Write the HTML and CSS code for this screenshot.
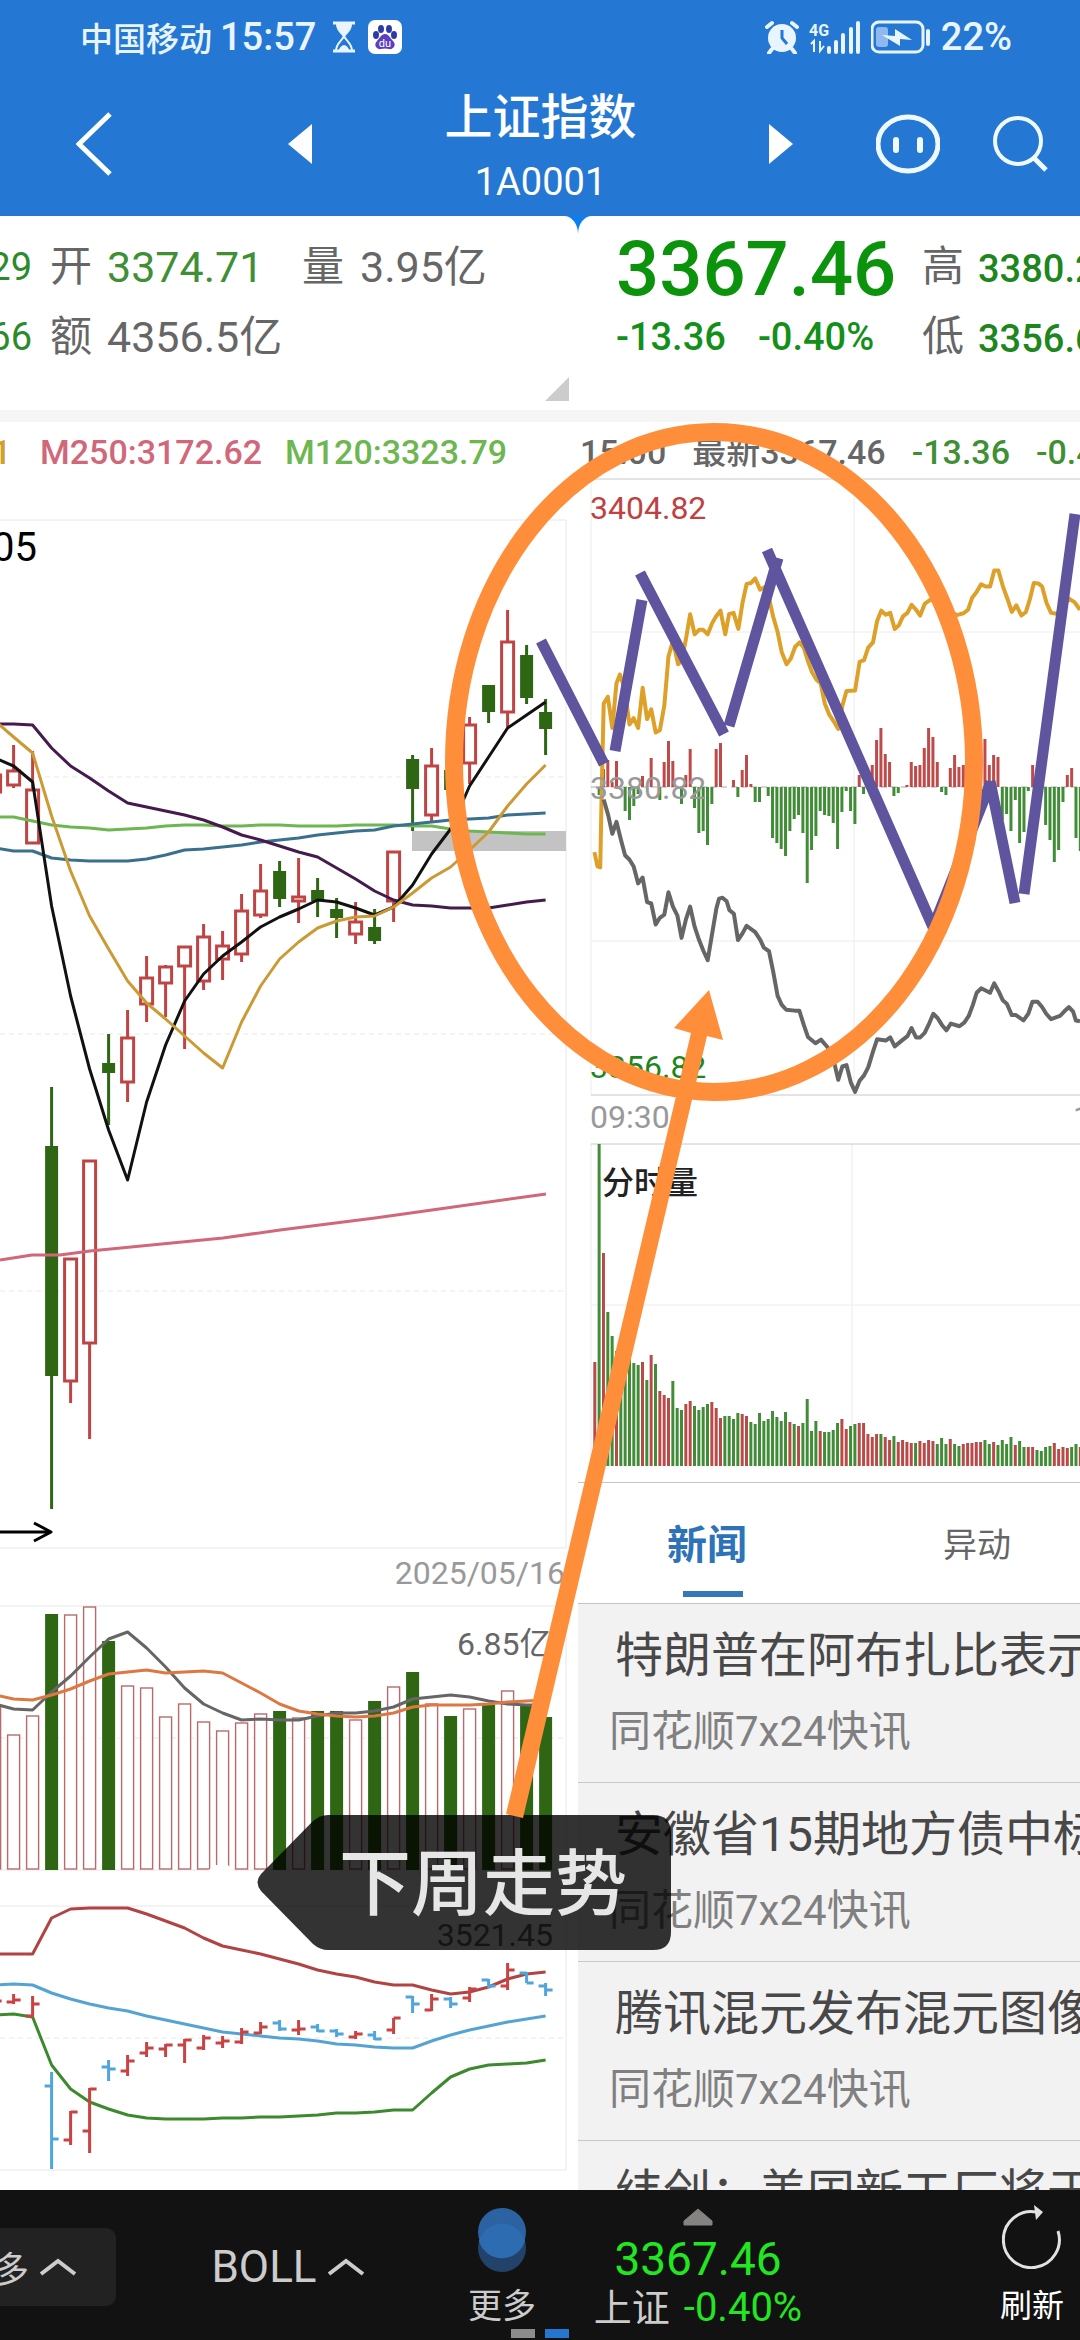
FILE: index.html
```html
<!DOCTYPE html>
<html lang="zh-CN">
<head>
<meta charset="utf-8">
<meta name="viewport" content="width=device-width, initial-scale=1">
<title>上证指数 1A0001</title>
<link rel="stylesheet" href="styles.css">
</head>
<body>
<div class="app">
  <div class="status">
    <span class="carrier">中国移动</span>
    <span class="clock">15:57</span>
    <svg class="glass" viewBox="0 0 24 32" width="24" height="32"><path d="M1 2H23M1 30H23" stroke="#e8f5ff" stroke-width="3"/><path d="M4 3H20C20 10 14 13 13 16H11C10 13 4 10 4 3Z" fill="#e8f5ff"/><path d="M4 30C4 22 11 19 12 15C13 19 20 22 20 30" fill="none" stroke="#e8f5ff" stroke-width="2"/><path d="M6 30Q12 18 18 30Z" fill="#e8f5ff"/></svg>
    <svg class="paw" viewBox="0 0 34 34" width="34" height="34"><rect width="34" height="34" rx="7" fill="#fff"/><g fill="#2c3aa8"><ellipse cx="13" cy="9" rx="3" ry="4"/><ellipse cx="21" cy="9" rx="3" ry="4"/><ellipse cx="8" cy="15" rx="3" ry="4"/><ellipse cx="26" cy="15" rx="3" ry="4"/><path d="M17 14C21 14 22 18 25 21C29 25 25 30 21 29Q17 28 13 29C9 30 5 25 9 21C12 18 13 14 17 14Z" fill="#5b3fc0"/></g><text x="17" y="27" text-anchor="middle" class="paw-text">du</text></svg>
    <span class="spacer"></span>
    <svg class="alarm" viewBox="0 0 34 34" width="34" height="34"><circle cx="17" cy="18" r="14" fill="#e8f5ff"/><path d="M2 7L7 3M32 7L27 3M7 29L4 33M27 29L30 33" stroke="#e8f5ff" stroke-width="4" stroke-linecap="round"/><path d="M17 10V18L22 24" fill="none" stroke="#2478d4" stroke-width="3"/></svg>
    <svg class="signal" viewBox="0 0 52 34" width="52" height="34"><text x="0" y="16" class="net">4G</text><path d="M2 24L5 21V32M11 21V31L15 26" fill="none" stroke="#e8f5ff" stroke-width="2"/><path d="M20 28V32M27 22V32M34 15V32M42 9V32M49 3V32" stroke="#e8f5ff" stroke-width="4" stroke-linecap="round"/></svg>
    <svg class="battery" viewBox="0 0 60 34" width="60" height="34"><rect x="1" y="2" width="51" height="30" rx="7" fill="none" stroke="#e8f5ff" stroke-width="3"/><rect x="5" y="7" width="12" height="20" rx="3" fill="#8fb9ee"/><path d="M11 15L24 16V9L41 20L29 19V26Z" fill="#e8f5ff"/><path d="M57 11V24" stroke="#e8f5ff" stroke-width="4" stroke-linecap="round"/></svg>
    <span class="pct">22%</span>
  </div>

  <header class="top">
    <button class="icon back" aria-label="返回"><svg viewBox="0 0 36 64" width="36" height="64"><path d="M34 2L3 32L34 62" fill="none" stroke="#fff" stroke-width="5"/></svg></button>
    <button class="icon" aria-label="上一只"><svg viewBox="0 0 24 40" width="24" height="40"><path d="M24 0V40L0 20Z" fill="#fff"/></svg></button>
    <div class="name"><h1>上证指数</h1><p>1A0001</p></div>
    <button class="icon next" aria-label="下一只"><svg viewBox="0 0 24 40" width="24" height="40"><path d="M0 0V40L24 20Z" fill="#fff"/></svg></button>
    <button class="icon face" aria-label="助手"><svg viewBox="0 0 64 60" width="64" height="60"><ellipse cx="32" cy="30" rx="30" ry="27" fill="none" stroke="#eefaff" stroke-width="5"/><path d="M20 26V36M44 26V36" stroke="#eefaff" stroke-width="6" stroke-linecap="round"/></svg></button>
    <button class="icon" aria-label="搜索"><svg viewBox="0 0 56 56" width="56" height="56"><circle cx="26" cy="25" r="23" fill="none" stroke="#eefaff" stroke-width="4"/><path d="M42 42L54 54" stroke="#eefaff" stroke-width="5"/></svg></button>
  </header>

  <section class="quotes">
    <div class="card left">
      <span class="cut">29</span><span class="lab">开</span><span class="num down">3374.71</span><span class="lab">量</span><span class="num">3.95亿</span>
      <span class="cut">66</span><span class="lab">额</span><span class="num">4356.5亿</span>
      <svg class="fold" viewBox="0 0 24 24" width="24" height="24"><path d="M24 0V24H0Z" fill="#ccc"/></svg>
    </div>
    <div class="card right">
      <strong class="price">3367.46</strong><span class="lab">高</span><span class="small">3380.29</span>
      <span class="small chg"><span>-13.36</span><span>-0.40%</span></span><span class="lab">低</span><span class="small">3356.66</span>
    </div>
  </section>

  <main class="panes">
    <section class="pane">
      <p class="legend"><span class="m20">1</span><span class="m250">M250:3172.62</span><span class="m120">M120:3323.79</span></p>
      <svg class="chart" viewBox="0 480 578 1110">
        <path class="frame" d="M0 520H566V1548H0"/>
        <path class="dash" d="M0 777H565M0 1034H565M0 1291H565"/>
        <rect x="412" y="831" width="154" height="20" fill="#c3c3c3"/>
        <g id="candles"></g>
        <g id="averages"></g>
        <path d="M0 1260L32 1255H60L90 1251L223 1238L280 1230L375 1218L432 1210L546 1194" class="line" stroke="#d0687a"/>
        <path d="M0 1532H50M34 1523L51 1532L34 1541" class="line" stroke="#000"/>
        <text x="37" y="561" class="t40" text-anchor="end">05</text>
        <text x="565" y="1584" class="t32 dim" text-anchor="end">2025/05/16</text>
      </svg>
      <svg class="chart" viewBox="0 1590 578 300">
        <path class="frame" d="M0 1606H566V1870H0"/>
        <path class="dash" d="M0 1738H565"/>
        <g id="volumes"></g>
        <path d="M208 1871L214 1865H228L233 1871Z" fill="#fff"/>
        <g id="volumeLines"></g>
        <text x="457" y="1655" class="t32 mid">6.85亿</text>
      </svg>
      <svg class="chart" viewBox="0 1890 578 300">
        <path class="frame" d="M0 1906H566V2170H0"/>
        <path class="dash" d="M0 2038H565"/>
        <g id="bands"></g>
        <g id="ticks"></g>
        <text x="553" y="1946" class="t32 mid" text-anchor="end">3521.45</text>
      </svg>
    </section>

    <section class="pane">
      <p class="now"><span>15:00</span><span>最新3367.46</span><span class="down">-13.36</span><span class="down">-0.40%</span></p>
      <svg class="chart" viewBox="578 478 502 660">
        <path class="grid" d="M591 478V1095M854 478V1095M591 632H1080M591 941H1080"/>
        <path class="rule" d="M591 479H1080M591 1095H1080"/>
        <path d="M591 787H1080" stroke="#a8a8a8" stroke-dasharray="6 4"/>
        <g id="power"></g>
        <g transform="translate(540 420) scale(.34437 .44643)">
          <path class="line fixed thick" stroke="#dda028" d="M158 968L167 1000 175 1002 180 800 185 635 197 620 210 690 222 590 232 570 245 600 260 682 272 668 285 690 298 600 311 670 323 648 336 700 348 695 361 640 373 530 386 495 401 547 411 540 424 490 436 435 449 480 462 470 474 470 487 480 500 455 511 440 524 427 538 480 549 435 562 432 576 468 588 410 600 367 613 365 625 355 639 380 652 375 665 400 677 440 690 475 702 520 716 547 728 535 741 508 754 498 766 510 778 540 790 565 803 582 815 590 827 635 840 660 853 675 866 692 878 640 890 607 915 606 928 542 941 538 953 510 967 498 979 450 991 427 1004 436 1017 432 1030 468 1042 460 1054 440 1067 432 1079 414 1092 425 1104 438 1117 412 1135 402 1150 410 1180 425 1210 437 1230 433 1243 425 1255 398 1268 385 1281 368 1294 373 1307 373 1319 337 1331 337 1344 372 1358 402 1370 430 1383 415 1398 438 1411 430 1423 400 1434 365 1447 366 1458 373 1471 410 1484 432 1500 434 1520 420 1535 400 1552 408 1568 425"/>
          <path class="line fixed thick" stroke="#666" d="M185 850L198 885 210 927 222 900 235 940 247 975 260 985 272 1000 285 1038 298 1025 311 1080 323 1083 336 1130 348 1115 361 1108 373 1058 386 1090 399 1110 411 1160 424 1118 436 1090 449 1135 462 1165 475 1190 487 1210 500 1150 512 1095 520 1072 530 1070 542 1078 550 1098 563 1106 575 1165 588 1150 600 1133 625 1147 640 1165 650 1182 665 1190 677 1235 690 1290 702 1310 715 1321 740 1323 753 1323 766 1355 778 1382 800 1396 816 1388 835 1405 853 1435 866 1478 878 1448 890 1445 903 1485 915 1505 928 1480 941 1468 953 1450 967 1415 979 1387 1004 1390 1017 1383 1030 1403 1054 1388 1067 1380 1079 1362 1092 1383 1104 1383 1117 1373 1130 1352 1142 1330 1155 1340 1167 1355 1180 1367 1193 1352 1218 1358 1232 1350 1245 1335 1257 1310 1268 1283 1281 1273 1307 1283 1319 1262 1332 1280 1344 1300 1356 1308 1370 1333 1382 1333 1404 1345 1418 1330 1430 1303 1445 1303 1458 1315 1470 1330 1484 1342 1510 1335 1522 1325 1536 1315 1548 1325 1556 1345 1568 1347"/>
        </g>
        <text x="590" y="519" class="t32" fill="#bf4141">3404.82</text>
        <text x="590" y="799" class="t32 dim">3380.82</text>
        <text x="590" y="1078" class="t32" fill="#1d861d">3356.82</text>
        <text x="590" y="1128" class="t32 dim">09:30</text>
        <text x="1073" y="1128" class="t32 dim">11:30</text>
      </svg>
      <svg class="chart" viewBox="578 1138 502 344">
        <path class="grid" d="M591 1144V1466M852 1144V1466M591 1305H1080"/>
        <path class="rule" d="M591 1144H1080"/>
        <g id="minutes"></g>
        <text x="602" y="1194" class="t32 strong" fill="#222">分时量</text>
      </svg>
      <nav class="tabs"><button class="tab on">新闻</button><button class="tab">异动</button></nav>
      <ul class="news">
        <li><a href="#n1">特朗普在阿布扎比表示</a><span>同花顺7x24快讯</span></li>
        <li><a href="#n2">安徽省15期地方债中标</a><span>同花顺7x24快讯</span></li>
        <li><a href="#n3">腾讯混元发布混元图像</a><span>同花顺7x24快讯</span></li>
        <li><a href="#n4">纬创：美国新工厂将于</a></li>
      </ul>
    </section>
  </main>

  <footer class="bar">
    <button class="pill">多<svg viewBox="0 0 38 18" width="38" height="18"><path d="M2 16L19 3L36 16" fill="none" stroke="#ccc" stroke-width="4"/></svg></button>
    <button class="boll">BOLL<svg viewBox="0 0 38 18" width="38" height="18"><path d="M2 16L19 3L36 16" fill="none" stroke="#ccc" stroke-width="4"/></svg></button>
    <button class="stack"><svg viewBox="0 0 48 64" width="48" height="64"><circle cx="24" cy="40" r="24" fill="#23426a"/><circle cx="24" cy="24" r="24" fill="#2c62a2"/><path d="M1 33A24 24 0 0 1 47 33A24 24 0 0 1 1 33Z" fill="#2e6cb2"/></svg>更多</button>
    <button class="index"><svg viewBox="0 0 30 18" width="30" height="18"><path d="M15 1L29 13V17H1V13Z" fill="#858282" stroke="#858282" stroke-linejoin="round"/></svg><span class="big">3367.46</span><span class="sub">上证<em>-0.40%</em></span></button>
    <button class="stack reload"><svg viewBox="0 0 60 64" width="60" height="64"><path d="M56 26A28 28 0 1 1 34 7" fill="none" stroke="#e2e2e2" stroke-width="3"/><path d="M32 0L41 7L34 15Z" fill="#e2e2e2"/></svg>刷新</button>
    <span class="dots"><i></i><i class="cur"></i></span>
  </footer>

  <svg class="marks" viewBox="0 0 1080 2340" aria-label="下周走势">
    <path d="M541 641L604 764M615 751L642 600M640 573L724 734M729 726L778 558M767 550L933 927M934 925L991 782M990 781L1015 903M1024 894L1075 514" fill="none" stroke="#5f549e" stroke-width="11"/>
    <ellipse cx="714" cy="762" rx="260" ry="330" fill="none" stroke="#ff8e3a" stroke-width="18"/>
    <path d="M328 1815H653Q671 1815 671 1833V1932Q671 1950 653 1950H328Q320 1950 313 1944L261 1891Q254 1882 261 1874L313 1821Q320 1815 328 1815Z" fill="#000" fill-opacity=".8"/>
    <path d="M506 1814L691 1033L674 1028L709 990L723 1040L707 1036L523 1818Z" fill="#ff8e3a"/>
    <text x="339" y="1909" class="note">下周走势</text>
  </svg>
</div>
<script src="charts.js"></script>
</body>
</html>
```
FILE: styles.css
```css
* { box-sizing: border-box; margin: 0; padding: 0; }
body {
  font-family: Roboto, "Noto Sans CJK SC", sans-serif;
  background: #fff;
  color: #666;
}
button { border: 0; background: none; font: inherit; color: inherit; display: flex; align-items: center; justify-content: center; }
a { color: inherit; text-decoration: none; }
svg { display: block; flex: none; }
.app { position: relative; height: 100vh; display: flex; flex-direction: column; overflow: hidden; }

.status { height: 72px; padding: 2px 68px 0 80px; display: flex; align-items: center; background: #2478d4; color: #e8f5ff; flex: none; }
.carrier { font-size: 33px; font-weight: 500; margin-right: 8px; }
.clock, .pct { font-size: 38px; font-weight: 500; }
.glass { margin-left: 16px; }
.paw { margin-left: 12px; }
.paw-text { font-size: 11px; fill: #fff; }
.spacer { flex: 1; }
.alarm { margin-right: 10px; }
.signal { margin-right: 10px; }
.battery { margin-right: 10px; }
.net { font-size: 16px; font-weight: 700; fill: #e8f5ff; }

.top { height: 144px; padding: 0 32px 0 76px; display: flex; align-items: center; background: #2478d4; color: #fff; flex: none; }
.back { margin-right: 176px; }
.next { margin-right: 83px; }
.face { margin-right: 52px; }
.name { flex: 1; text-align: center; padding-top: 8px; }
.name h1 { font-size: 48px; line-height: 68px; font-weight: 500; }
.name p { font-size: 38px; line-height: 60px; }

.quotes { display: grid; grid-template-columns: 578fr 502fr; background: #0a80f0; border-bottom: 12px solid #f5f5f5; flex: none; }
.card { position: relative; height: 194px; background: #fff; padding-top: 16px; display: grid; grid-auto-rows: 70px; align-items: center; white-space: nowrap; overflow: hidden; }
.left { grid-template-columns: 50px 57px 195px 58px 1fr; border-top-right-radius: 14px 18px; }
.right { grid-template-columns: 306px 56px 1fr; padding-left: 38px; border-top-left-radius: 14px 18px; }
.cut { font-size: 38px; color: #2b8a2b; width: 32px; display: flex; justify-content: flex-end; }
.lab, .num { font-size: 42px; line-height: 70px; }
.num { font-size: 43px; }
.num.down { color: #3f8f35; }
.small { font-size: 38px; font-weight: 500; color: #1d861d; padding-top: 4px; }
.chg { display: flex; gap: 32px; color: #12901a; padding-top: 0; }
.price { font-size: 76px; font-weight: 500; color: #0c930c; line-height: 70px; padding-top: 4px; }
.fold { position: absolute; right: 9px; bottom: 9px; }

.panes { flex: 1; min-height: 0; display: grid; grid-template-columns: 578fr 502fr; grid-template-rows: minmax(0, 1fr); }
.pane { min-width: 0; min-height: 0; display: flex; flex-direction: column; overflow: hidden; white-space: nowrap; }
.chart { width: 100%; height: auto; }
.legend { height: 58px; line-height: 60px; font-size: 34px; font-weight: 500; display: flex; flex: none; }
.m20 { color: #d0a030; width: 40px; text-indent: -8px; }
.m250 { color: #d0687a; width: 245px; }
.m120 { color: #6db650; }
.now { height: 56px; line-height: 60px; font-size: 34px; font-weight: 500; display: flex; gap: 26px; padding-left: 2px; flex: none; }
.now .down { color: #3f8f35; }

.frame { fill: none; stroke: #e8e8e8; }
.grid { fill: none; stroke: #ececec; }
.rule { fill: none; stroke: #c8c8c8; }
.dash { stroke: #e8e8e8; stroke-dasharray: 5 4; }
.line { fill: none; stroke-width: 3; stroke-linejoin: round; }
.thick { stroke-width: 4; }
.fixed { vector-effect: non-scaling-stroke; }
.t32 { font-size: 32px; }
.t40 { font-size: 40px; fill: #000; }
.strong { font-weight: 500; }
.dim { fill: #999; }
.mid { fill: #666; }

.tabs { height: 122px; border-top: 1px solid #c4c4c4; border-bottom: 1px solid #c4c4c4; display: flex; flex: none; }
.tab { position: relative; flex: 0 0 53%; font-size: 34px; padding-bottom: 2px; }
.tab.on { font-size: 40px; font-weight: 700; color: #2e73b8; padding-right: 8px; }
.tab.on::after { content: ""; position: absolute; left: 50%; bottom: 6px; width: 60px; height: 6px; margin-left: -28px; background: #3478b8; }

.news { list-style: none; flex: 1; min-height: 0; background: #f2f2f2; overflow: hidden; }
.news li { height: 179px; padding: 17px 0 0 31px; border-bottom: 1px solid #c8c8c8; }
.news a { display: block; padding-left: 6px; font-size: 48px; line-height: 70px; color: #484848; }
.news span { display: block; font-size: 42px; line-height: 82px; color: #808080; }

.bar { position: relative; height: 150px; flex: none; background: #121212; color: #ccc; display: grid; grid-template-columns: 116fr 344fr 84fr 308fr 228fr; align-items: center; white-space: nowrap; }
.pill { height: 78px; justify-content: flex-end; padding-right: 39px; gap: 10px; font-size: 36px; background: #222; border-radius: 0 10px 10px 0; overflow: hidden; }
.boll { font-size: 44px; gap: 10px; }
.stack { align-self: stretch; flex-direction: column; justify-content: flex-start; padding-top: 18px; font-size: 34px; line-height: 68px; }
.reload { justify-self: end; width: 96px; padding-top: 15px; color: #fff; font-size: 32px; line-height: 74px; }
.index { align-self: stretch; flex-direction: column; justify-content: flex-start; padding-top: 18px; color: #22e622; }
.big { font-size: 46px; line-height: 66px; }
.sub { font-size: 38px; line-height: 32px; color: #ccc; display: flex; gap: 14px; }
.sub em { font-size: 40px; font-style: normal; color: #22e622; }
.dots { position: absolute; left: 50%; bottom: 2px; margin-left: -29px; display: flex; gap: 10px; }
.dots i { width: 24px; height: 9px; background: #8c8c8c; }
.dots .cur { background: #2676cf; }

.marks { position: absolute; left: 0; top: 0; width: 100%; pointer-events: none; }
.note { font-size: 72px; font-weight: 500; fill: #e6e6e6; }
```
FILE: charts.js
```js
const RED = '#bf4444', GREEN = '#2f6613';
const x = i => 13.6 + 19 * i;
const put = (id, html) => { document.getElementById(id).innerHTML = html; };
const line = (color, values) =>
  `<path class="line" stroke="${color}" d="M${values.map((v, i) => `${i ? x(i - 1) : -5} ${v}`).join('L')}"/>`;

// index, colour, high, body top, body bottom, low
const candles = [
  [-1,'r',774,774,793,793],[0,'r',745,770,786,788],[1,'r',751,789,844,844],[2,'g',1087,1146,1376,1509],
  [3,'r',1258,1258,1382,1403],[4,'r',1160,1160,1344,1439],[5,'g',1034,1063,1073,1125],[6,'r',1010,1037,1083,1102],
  [7,'r',956,977,1005,1022],[8,'r',965,966,984,1017],[9,'r',946,946,967,1049],[10,'r',924,936,982,990],
  [11,'r',931,945,960,980],[12,'r',894,910,955,962],[13,'r',864,890,916,918],[14,'g',861,871,899,907],
  [15,'r',858,896,902,923],[16,'g',878,890,901,917],[17,'g',898,909,918,938],[18,'r',902,921,935,944],
  [19,'g',909,927,941,944],[20,'r',851,851,902,922],[21,'g',755,759,789,831],[22,'r',748,765,816,823],
  [23,'g',766,770,790,806],[24,'r',717,724,764,784],[25,'g',685,685,712,723],[26,'r',610,641,713,727],
  [27,'g',645,655,698,704],[28,'g',699,712,729,755]];
put('candles', candles.map(([i, k, h, t, b, l]) => {
  const c = k === 'r' ? RED : GREEN;
  const body = k === 'r'
    ? `<rect x="${x(i) - 6}" y="${t + 1}" width="12" height="${b - t - 2}" fill="#fff" stroke="${c}" stroke-width="3"/>`
    : `<rect x="${x(i) - 6.5}" y="${t}" width="13" height="${b - t}" fill="${c}"/>`;
  return `<path d="M${x(i)} ${h}V${t}M${x(i)} ${b}V${l}" stroke="${c}" stroke-width="3"/>${body}`;
}).join(''));

put('averages',
  line('#6db650', [817,817,821,825,827,828,830,829,828,826,825,825,826,826,825,825,826,826,826,825,825,825,826,826,829,831,832,833,834,834]) +
  line('#39708f', [848,851,851,858,860,861,861,861,859,855,850,849,847,845,842,840,838,835,833,831,830,826,824,822,820,819,818,815,814,813]) +
  line('#451a4c', [724,724,725,748,766,778,791,803,807,811,815,820,827,835,840,846,852,857,868,879,891,900,905,906,908,908,908,905,902,900]) +
  line('#111', [758,766,782,906,996,1069,1130,1180,1102,1045,1001,974,956,942,927,917,909,900,902,908,915,907,885,854,829,786,757,728,715,702]) +
  line('#cc9a35', [721,737,753,816,871,916,949,981,1003,1019,1036,1053,1068,1022,986,959,942,928,921,917,916,907,893,878,867,850,832,806,784,765]));

const volumes = 'r1706 r1734 r1715 g1614 r1614 r1606 g1641 r1685 r1687 r1716 r1703 r1721 r1730 r1722 r1713 g1711 r1717 g1711 g1711 r1719 g1701 r1686 g1672 r1703 g1716 r1708 g1705 r1690 g1704 g1717'.split(' ');
put('volumes', volumes.map((v, n) => {
  const top = +v.slice(1), c = x(n - 1);
  return v[0] === 'r'
    ? `<rect x="${c - 6}" y="${top + 1}" width="12" height="${1868 - top}" fill="#fff" stroke="#b96a6a" stroke-width="1.4"/>`
    : `<rect x="${c - 6.5}" y="${top}" width="13" height="${1870 - top}" fill="${GREEN}"/>`;
}).join(''));
put('volumeLines',
  line('#666', [1704,1709,1710,1692,1676,1657,1639,1632,1648,1667,1688,1704,1713,1720,1719,1720,1720,1716,1713,1713,1711,1707,1699,1697,1695,1697,1701,1704,1705,1705]) +
  line('#dd7844', [1695,1699,1700,1695,1689,1681,1674,1672,1670,1673,1672,1671,1673,1683,1693,1704,1711,1714,1716,1717,1716,1713,1707,1705,1705,1705,1704,1702,1701,1700]));

put('bands',
  line('#b24343', [1954,1954,1954,1918,1909,1908,1908,1908,1914,1921,1928,1938,1946,1950,1954,1959,1964,1970,1974,1977,1982,1985,1985,1990,1994,1992,1987,1979,1974,1972]) +
  line('#55a3d3', [1985,1984,1985,1993,1999,2004,2008,2011,2016,2020,2024,2028,2032,2034,2036,2038,2039,2041,2044,2045,2047,2048,2048,2041,2035,2030,2026,2022,2019,2016]) +
  line('#3d8a2e', [2015,2014,2017,2065,2089,2102,2109,2115,2118,2119,2119,2119,2118,2118,2117,2117,2116,2115,2113,2113,2112,2110,2110,2093,2077,2069,2065,2064,2063,2060]));

// colour, high, low, open, close
const ticks = [
  ['r',1999,2003,2001,2001],['r',1994,2004,2002,2000],['r',1996,2017,2016,2004],['b',2072,2169,2086,2139],
  ['r',2111,2145,2140,2112],['r',2088,2153,2131,2089],['b',2060,2081,2067,2069],['r',2055,2076,2071,2061],
  ['r',2042,2057,2053,2048],['r',2044,2057,2049,2045],['r',2039,2063,2045,2040],['r',2035,2050,2048,2038],
  ['r',2036,2048,2043,2041],['r',2028,2044,2042,2032],['r',2022,2034,2033,2027],['b',2020,2031,2023,2029],
  ['r',2020,2035,2030,2029],['b',2024,2032,2027,2031],['b',2029,2037,2031,2034],['r',2031,2039,2037,2034],
  ['b',2031,2040,2035,2039],['r',2018,2034,2030,2018],['b',1996,2013,1997,2004],['r',1994,2011,2010,1999],
  ['b',1997,2008,1999,2004],['r',1987,2002,1998,1989],['b',1979,1988,1980,1986],['r',1963,1990,1986,1970],
  ['b',1972,1983,1973,1983],['b',1983,1996,1986,1990]];
put('ticks', ticks.map(([k, h, l, o, c], n) =>
  `<path d="M${x(n - 1)} ${h}V${l}M${x(n - 1) - 7} ${o}h7M${x(n - 1)} ${c}h7" fill="none" stroke="${k === 'r' ? '#c94343' : '#4fa6dc'}" stroke-width="3"/>`).join(''));

// minute bars share a 4.33 unit pitch
const mx = j => 594.8 + 4.335 * j;
const power = { 1:-8,2:18,3:27,4:5,5:26,7:-24,8:-33,9:-19,10:-7,11:11,13:29,15:-13,16:25,17:46,18:26,20:-17,21:12,22:38,23:-21,24:-46,25:-44,26:-58,27:-17,
  28:38,29:44,32:7,33:-10,34:17,35:32,36:3,37:-15,38:-15,40:-9,41:-51,42:-56,43:-62,44:-69,45:-44,46:-32,47:-28,48:-46,49:-96,50:-63,51:-49,52:-24,
  53:-28,54:-29,55:-36,56:-62,57:-25,58:-4,59:-24,60:-37,61:12,62:-7,63:16,64:22,65:47,66:59,67:33,68:25,69:-9,70:-6,72:2,73:25,74:21,75:22,76:39,77:59,78:50,
  79:25,80:-5,81:-8,82:19,83:32,84:20,85:22,86:25,87:30,88:20,90:48,91:22,92:32,93:30,94:-33,95:-27,96:-44,97:-13,98:-56,99:-45,100:-4,101:22,
  104:-38,105:-53,106:-75,107:-63,108:-15,109:12,110:19,111:-51,112:-64 };
put('power', Object.entries(power).map(([j, v]) =>
  `<path d="M${mx(+j)} 787v${-v}" stroke="${v > 0 ? '#bf4a4a' : '#418c36'}" stroke-width="3"/>`).join(''));

const minutes = 'r104 g322 r213 g154 g130 r115 g112 g112 g108 g103 g101 r104 g86 r111 g102 r75 r71 r68 g85 g58 g56 r62 r65 g60 g56 g59 g62 r64 r58 r48 g50 g50 g47 g53 r52 r50 g44 g42 g53 g45 g47 g55 g49 g45 g54 r44 g42 r40 g43 g67 g35 g45 r35 g34 g34 g36 g43 r47 r37 g40 g42 r43 r43 r32 r29 r32 g32 r29 r26 g30 r24 r26 r24 r23 g23 r25 r23 r26 r25 g22 g28 g22 r27 g22 g20 r22 r23 r23 r24 r24 g26 g22 r24 g21 g26 g22 g29 r21 g25 g19 r19 r19 g16 g15 g19 g20 r23 r17 r19 r18 g19 g22 r19';
put('minutes', minutes.split(' ').map((v, j) =>
  `<path d="M${mx(j)} 1466v-${v.slice(1)}" stroke="${v[0] === 'r' ? '#b94a4a' : '#418c36'}" stroke-width="3"/>`).join(''));
```
